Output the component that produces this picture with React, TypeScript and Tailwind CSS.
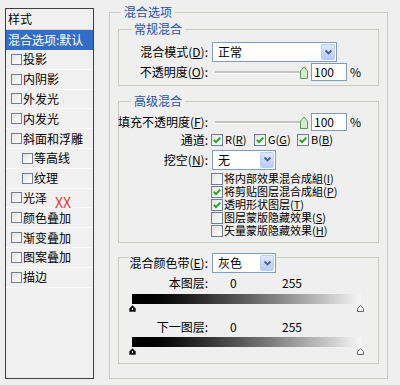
import React from "react"

const styleItems = [
  { label: "投影", indent: false },
  { label: "内阴影", indent: false },
  { label: "外发光", indent: false },
  { label: "内发光", indent: false },
  { label: "斜面和浮雕", indent: false },
  { label: "等高线", indent: true },
  { label: "纹理", indent: true },
  { label: "光泽", indent: false },
  { label: "颜色叠加", indent: false },
  { label: "渐变叠加", indent: false },
  { label: "图案叠加", indent: false },
  { label: "描边", indent: false },
]

function Box({ checked = false, small = false }: { checked?: boolean; small?: boolean }) {
  return (
    <span
      className={`${small ? "w-[11px] h-[11px]" : "w-[12px] h-[12px]"} shrink-0 border border-[#6d7f9c] bg-linear-to-br from-[#e4e4de] to-white flex items-center justify-center`}
    >
      {checked && (
        <svg width="10" height="10" viewBox="0 0 10 10">
          <path d="M1.8 4.8 L4 7.2 L8.3 2.6" fill="none" stroke="#21a121" strokeWidth="1.9" />
        </svg>
      )}
    </span>
  )
}

function Combo({ text, wide = false }: { text: string; wide?: boolean }) {
  return (
    <div
      className={`${wide ? "w-[125px]" : "w-[64px]"} h-[20px] ml-[4px] border border-[#7f9db9] bg-white flex items-stretch`}
    >
      <span className="flex-1 pl-[5px] flex items-center">{text}</span>
      <span className="m-[1px] w-[14px] rounded-[2px] border border-[#b9cdf6] bg-linear-to-b from-[#dfe8fd] to-[#b7cbf6] flex items-center justify-center">
        <svg width="9" height="7" viewBox="0 0 9 7">
          <path d="M1.5 1.5 L4.5 4.5 L7.5 1.5" fill="none" stroke="#4d6185" strokeWidth="1.8" />
        </svg>
      </span>
    </div>
  )
}

function Slider() {
  return (
    <div className="ml-[4px] flex items-center">
      <div className="ml-[3px] w-[85px] h-[3px] bg-[#c4c4c0] border-b border-white" />
      <svg width="8" height="13" viewBox="0 0 8 13">
        <path d="M0.5 5 L4 1 L7.5 5 V12.5 H0.5 Z" fill="#d3eccd" stroke="#5f9a5c" />
      </svg>
      <div className="ml-[3px] w-[36px] h-[18px] border border-[#7f9db9] bg-white pl-[2px] flex items-center">100</div>
      <span className="ml-[3px]">%</span>
    </div>
  )
}

function Thumbs() {
  return (
    <div className="mt-[1px] ml-[10px] w-[235px] h-[7px] flex justify-between">
      <svg width="7" height="7" viewBox="0 0 7 7">
        <path d="M3.5 0.3 L6.7 3.4 V6.7 H0.3 V3.4 Z" fill="#111" />
        <rect x="3" y="3" width="1" height="2" fill="#fff" />
      </svg>
      <svg width="7" height="7" viewBox="0 0 7 7">
        <path d="M3.5 0.7 L6.5 3.6 V6.5 H0.5 V3.6 Z" fill="#fafafa" stroke="#555" strokeWidth="0.9" />
      </svg>
    </div>
  )
}

function Label({ children, w = "w-[89px]" }: { children: React.ReactNode; w?: string }) {
  return <div className={`${w} shrink-0 flex justify-end whitespace-nowrap`}>{children}</div>
}

function Legend({ children, left }: { children: React.ReactNode; left: string }) {
  return <div className={`-mt-[8px] ${left} w-fit px-[3px] h-[14px] bg-[#efefef] text-[#1f4f9f]`}>{children}</div>
}

export default function App() {
  return (
    <div className="relative w-[400px] h-[385px] overflow-hidden bg-[#efefef] flex items-start font-['Noto_Sans_CJK_SC',sans-serif] text-[12px] leading-[14px] text-black">
      <div className="ml-[5px] mt-[8px] w-[89px] h-[371px] border border-[#3f3f3f] bg-[#f0f0f0] flex flex-col">
        <div className="h-[21px] pl-[2px] flex items-center border-b border-[#d6d6d6]">样式</div>
        <div className="h-[20px] pl-[2px] flex items-center bg-[#346dc6] text-white whitespace-nowrap">混合选项:默认</div>
        {styleItems.map((item, i) => (
          <div
            key={i}
            className={`h-[19.8px] shrink-0 flex items-center gap-[1px] border-b border-[#fbfbfb] ${item.indent ? "pl-[16px]" : "pl-[5px]"}`}
          >
            <Box small />
            <span>{item.label}</span>
          </div>
        ))}
      </div>

      <div className="ml-[15px] mt-[12px] w-[279px] h-[367px] border border-[#cbcbc4] px-[8px]">
        <Legend left="ml-[3px]">混合选项</Legend>

        <div className="mt-[10px] w-[261px] h-[57px] border border-[#cbcbc4]">
          <Legend left="ml-[12px]">常规混合</Legend>
          <div className="mt-[6px] h-[20px] flex items-center">
            <Label>混合模式(<u>D</u>):</Label>
            <Combo text="正常" wide />
          </div>
          <div className="mt-[1px] h-[18px] flex items-center">
            <Label>不透明度(<u>O</u>):</Label>
            <Slider />
          </div>
        </div>

        <div className="mt-[15px] w-[261px] h-[142px] border border-[#cbcbc4]">
          <Legend left="ml-[12px]">高级混合</Legend>
          <div className="mt-[5px] h-[18px] flex items-center">
            <Label>填充不透明度(<u>F</u>):</Label>
            <Slider />
          </div>
          <div className="mt-[2px] h-[13px] flex items-center leading-[13px]">
            <Label>通道:</Label>
            <div className="ml-[3px] flex">
              {["R", "G", "B"].map((c) => (
                <div key={c} className="w-[43px] flex items-center gap-[2px]">
                  <Box checked />
                  <span className="text-[11px]">
                    {c}(<u>{c}</u>)
                  </span>
                </div>
              ))}
            </div>
          </div>
          <div className="mt-[4px] h-[19px] flex items-center">
            <Label>挖空(<u>N</u>):</Label>
            <Combo text="无" />
          </div>
          <div className="mt-[3px] ml-[92px] flex flex-col text-[11px] leading-[13px]">
            {[
              { t: "将内部效果混合成組", k: "I", c: false },
              { t: "将剪贴图层混合成組", k: "P", c: true },
              { t: "透明形状图层", k: "T", c: true },
              { t: "图层蒙版隐藏效果", k: "S", c: false },
              { t: "矢量蒙版隐藏效果", k: "H", c: false },
            ].map((r) => (
              <div key={r.k} className="h-[13px] flex items-center gap-[1px] whitespace-nowrap">
                <Box checked={r.c} />
                <span>
                  {r.t}(<u>{r.k}</u>)
                </span>
              </div>
            ))}
          </div>
        </div>

        <div className="mt-[14px] w-[261px] h-[107px] border border-[#cbcbc4]">
          <div className="-mt-[5px] ml-[10px] w-fit h-[20px] pr-[1px] bg-[#efefef] flex items-center">
            <Label w="w-[79px]">混合颜色带(<u>E</u>):</Label>
            <Combo text="灰色" />
          </div>
          <div className="mt-[3px] h-[14px] flex items-center">
            <Label>本图层:</Label>
            <span className="ml-[22px] w-[52px]">0</span>
            <span>255</span>
          </div>
          <div className="mt-[4px] ml-[13px] w-[229px] h-[10px] bg-linear-to-r from-black to-[#f6f6f6]" />
          <Thumbs />
          <div className="mt-[8px] h-[14px] flex items-center">
            <Label>下一图层:</Label>
            <span className="ml-[22px] w-[52px]">0</span>
            <span>255</span>
          </div>
          <div className="mt-[3px] ml-[13px] w-[229px] h-[10px] bg-linear-to-r from-black to-[#f6f6f6]" />
          <Thumbs />
        </div>
      </div>

      <div className="absolute left-[55px] top-[194px] text-[14px] leading-[16px] text-[#e4383c]">XX</div>
    </div>
  )
}
